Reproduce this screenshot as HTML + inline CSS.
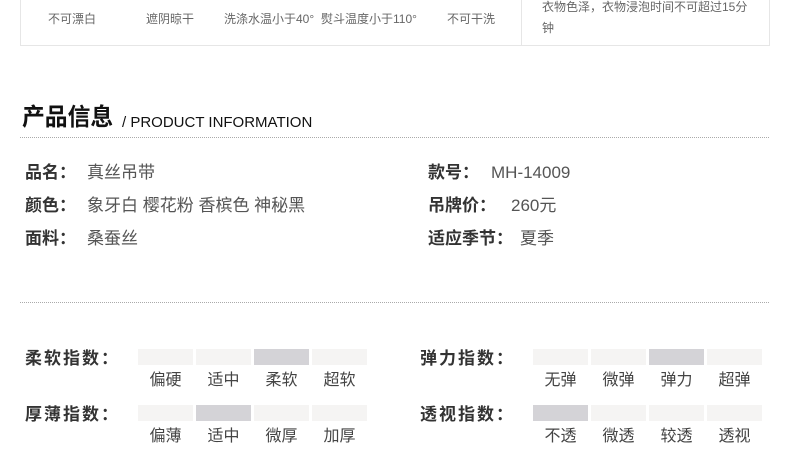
<!DOCTYPE html>
<html><head><meta charset="utf-8"><style>
body{margin:0;width:790px;height:476px;background:#fff;position:relative;overflow:hidden;font-family:"Liberation Sans","Noto Sans CJK SC",sans-serif;color:#333}
.a{position:absolute;white-space:nowrap;line-height:22px}
.s{font-size:12px;color:#666;line-height:normal}
.k{font-size:17px;font-weight:bold;color:#333}
.v{font-size:17px;color:#555}
.bar{position:absolute;width:55px;height:16px;background:#f5f4f3}
.on{background:#d4d3d7}
.lb{position:absolute;width:55px;text-align:center;font-size:16px;color:#444}
.h{font-size:17px;font-weight:bold;color:#333;letter-spacing:2px}
</style></head><body>
<div class="a" style="left:20px;top:-2px;width:748px;height:47px;border:1px solid #e6e6e6;border-top:none"></div>
<div class="a" style="left:521px;top:0;width:1px;height:46px;background:#e6e6e6"></div>
<div class="a s" style="left:48px;top:10px">不可漂白</div>
<div class="a s" style="left:146px;top:10px">遮阴晾干</div>
<div class="a s" style="left:224px;top:10px">洗涤水温小于40°</div>
<div class="a s" style="left:321px;top:10px">熨斗温度小于110°</div>
<div class="a s" style="left:447px;top:10px">不可干洗</div>
<div class="a s" style="left:542px;top:-2px">衣物色泽，衣物浸泡时间不可超过15分</div>
<div class="a s" style="left:542px;top:19px">钟</div>

<div class="a" style="left:22px;top:104px;font-size:24px;line-height:28px;font-weight:bold;color:#111;transform:scaleX(0.95);transform-origin:left top">产品信息</div>
<div class="a" style="left:122px;top:112px;font-size:15px;color:#111">/ PRODUCT INFORMATION</div>
<div class="a" style="left:20px;top:137px;width:749px;border-top:1px dotted #aaa"></div>

<div class="a k" style="left:25px;top:162px">品名：</div><div class="a v" style="left:87px;top:162px">真丝吊带</div>
<div class="a k" style="left:25px;top:195px">颜色：</div><div class="a v" style="left:87px;top:195px">象牙白 樱花粉 香槟色 神秘黑</div>
<div class="a k" style="left:25px;top:228px">面料：</div><div class="a v" style="left:87px;top:228px">桑蚕丝</div>
<div class="a k" style="left:428px;top:162px">款号：</div><div class="a v" style="left:491px;top:162px">MH-14009</div>
<div class="a k" style="left:428px;top:195px">吊牌价：</div><div class="a v" style="left:511px;top:195px">260元</div>
<div class="a k" style="left:428px;top:228px">适应季节：</div><div class="a v" style="left:520px;top:228px">夏季</div>
<div class="a" style="left:20px;top:302px;width:749px;border-top:1px dotted #aaa"></div>

<div class="a h" style="left:25px;top:348px">柔软指数：</div>
<div class="a h" style="left:25px;top:404px">厚薄指数：</div>
<div class="a h" style="left:420px;top:348px">弹力指数：</div>
<div class="a h" style="left:420px;top:404px">透视指数：</div>

<div class="bar" style="left:138px;top:349px"></div><div class="bar" style="left:196px;top:349px"></div><div class="bar on" style="left:254px;top:349px"></div><div class="bar" style="left:312px;top:349px"></div>
<div class="lb" style="left:138px;top:366px">偏硬</div><div class="lb" style="left:196px;top:366px">适中</div><div class="lb" style="left:254px;top:366px">柔软</div><div class="lb" style="left:312px;top:366px">超软</div>
<div class="bar" style="left:138px;top:405px"></div><div class="bar on" style="left:196px;top:405px"></div><div class="bar" style="left:254px;top:405px"></div><div class="bar" style="left:312px;top:405px"></div>
<div class="lb" style="left:138px;top:422px">偏薄</div><div class="lb" style="left:196px;top:422px">适中</div><div class="lb" style="left:254px;top:422px">微厚</div><div class="lb" style="left:312px;top:422px">加厚</div>

<div class="bar" style="left:533px;top:349px"></div><div class="bar" style="left:591px;top:349px"></div><div class="bar on" style="left:649px;top:349px"></div><div class="bar" style="left:707px;top:349px"></div>
<div class="lb" style="left:533px;top:366px">无弹</div><div class="lb" style="left:591px;top:366px">微弹</div><div class="lb" style="left:649px;top:366px">弹力</div><div class="lb" style="left:707px;top:366px">超弹</div>
<div class="bar on" style="left:533px;top:405px"></div><div class="bar" style="left:591px;top:405px"></div><div class="bar" style="left:649px;top:405px"></div><div class="bar" style="left:707px;top:405px"></div>
<div class="lb" style="left:533px;top:422px">不透</div><div class="lb" style="left:591px;top:422px">微透</div><div class="lb" style="left:649px;top:422px">较透</div><div class="lb" style="left:707px;top:422px">透视</div>
</body></html>
